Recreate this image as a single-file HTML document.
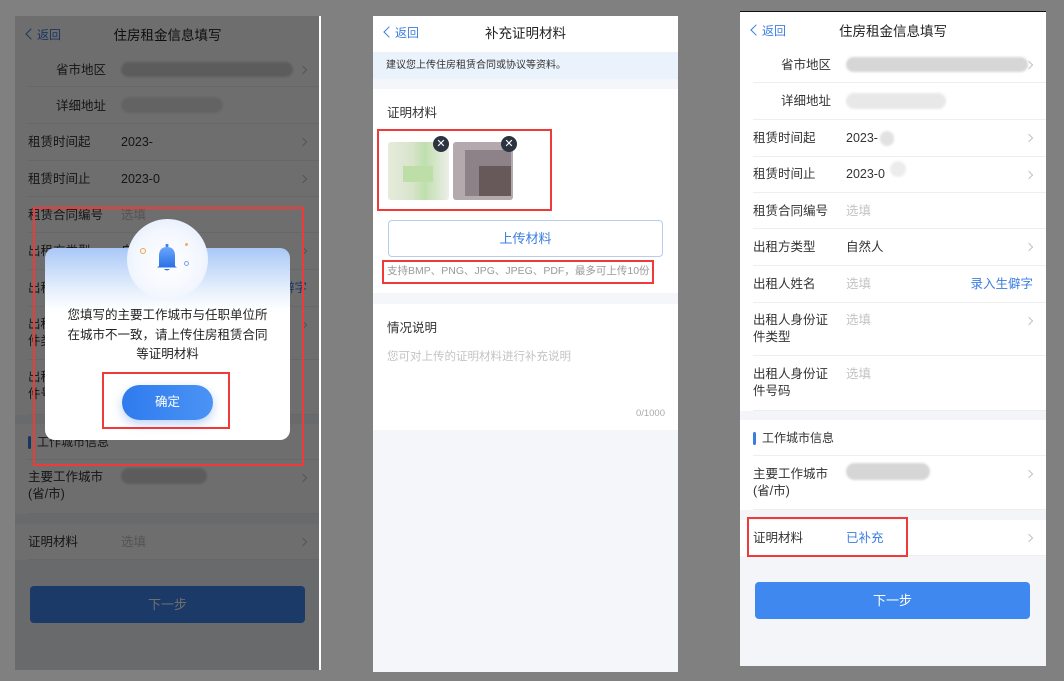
<!DOCTYPE html>
<html><head><meta charset="utf-8">
<style>
*{margin:0;padding:0;box-sizing:border-box}
body{width:1064px;height:681px;background:#808080;position:relative;overflow:hidden;font-family:"Liberation Sans","Noto Sans CJK SC",sans-serif;color:#333}
.p{position:absolute;background:#f3f5f9;overflow:hidden}
.a{position:absolute;white-space:nowrap}
.hd{position:absolute;left:0;top:0;width:100%;height:37px;background:#fff}
.back{position:absolute;left:12px;top:11px;font-size:12px;line-height:16px;color:#3a7de0}
.back:before{content:"";display:inline-block;width:7px;height:7px;border-left:1.5px solid #3a7de0;border-bottom:1.5px solid #3a7de0;transform:rotate(45deg);margin-right:2px;position:relative;top:-1px}
.ttl{position:absolute;left:0;width:100%;top:11px;line-height:18px;text-align:center;font-size:13.5px;color:#222}
.row{position:absolute;left:0;width:100%;background:#fff}
.row .l{position:absolute;left:13px;font-size:12.5px;color:#333;line-height:17px}
.row .v{position:absolute;left:106px;font-size:12.5px;color:#333;line-height:17px}
.row .ph{color:#c4c4c4}
.row:after{content:"";position:absolute;left:13px;right:0;bottom:0;height:1px;background:#eeeeee}
.chev{position:absolute;right:14px;width:6px;height:6px;border-right:1.3px solid #c2c2c2;border-top:1.3px solid #c2c2c2;transform:rotate(45deg)}
.blur{position:absolute;background:#d6d6d6;border-radius:10px;filter:blur(1px)}
.btn{position:absolute;left:15px;width:275px;height:37px;top:570px;background:#3f88f0;border-radius:4px;color:#fff;font-size:13px;text-align:center;line-height:37px}
.red{position:absolute;border:2px solid #f03a3a}
</style></head><body>

<!-- PANEL 1 -->
<div class="p" style="left:15px;top:16px;width:305px;height:654px">
 <div class="hd"></div><div class="back">返回</div><div class="ttl">住房租金信息填写</div>
 <div class="row" style="top:37px;height:34px"><div class="l" style="left:41px;top:9px">省市地区</div><div class="blur" style="left:106px;top:9px;width:172px;height:15px"></div><div class="chev" style="top:14px"></div></div>
 <div class="row" style="top:71px;height:37px"><div class="l" style="left:41px;top:11px">详细地址</div><div class="blur" style="left:106px;top:10px;width:102px;height:16px;background:#e6e6e6"></div></div>
 <div class="row" style="top:108px;height:37px"><div class="l" style="top:10px">租赁时间起</div><div class="v" style="top:10px">2023-</div><div class="chev" style="top:15px"></div></div>
 <div class="row" style="top:145px;height:36px"><div class="l" style="top:10px">租赁时间止</div><div class="v" style="top:10px">2023-0</div><div class="chev" style="top:15px"></div></div>
 <div class="row" style="top:181px;height:36px"><div class="l" style="top:10px">租赁合同编号</div><div class="v ph" style="top:10px">选填</div></div>
 <div class="row" style="top:217px;height:37px"><div class="l" style="top:10px">出租方类型</div><div class="v" style="top:10px">自然人</div><div class="chev" style="top:15px"></div></div>
 <div class="row" style="top:254px;height:37px"><div class="l" style="top:10px">出租人姓名</div><div class="v ph" style="top:10px">选填</div><div class="a" style="right:13px;top:10px;font-size:12.5px;line-height:17px;color:#3a7de0">录入生僻字</div></div>
 <div class="row" style="top:291px;height:53px"><div class="l" style="top:9px">出租人身份证<br>件类型</div><div class="v ph" style="top:9px">选填</div><div class="chev" style="top:15px"></div></div>
 <div class="row" style="top:344px;height:55px"><div class="l" style="top:9px">出租人身份证<br>件号码</div><div class="v ph" style="top:9px">选填</div></div>
 <div class="row" style="top:408px;height:36px"><div style="position:absolute;left:13px;top:12px;width:3px;height:13px;background:#3a7de0;border-radius:2px"></div><div class="l" style="left:22px;top:10px;font-size:12px">工作城市信息</div></div>
 <div class="row" style="top:444px;height:54px"><div class="l" style="top:9px">主要工作城市<br>(省/市)</div><div class="blur" style="left:106px;top:8px;width:86px;height:16px"></div><div class="chev" style="top:15px"></div></div>
 <div class="row" style="top:508px;height:36px"><div class="l" style="top:10px">证明材料</div><div class="v ph" style="top:10px">选填</div><div class="chev" style="top:15px"></div></div>
 <div class="btn">下一步</div>
 <div style="position:absolute;inset:0;background:rgba(0,0,0,0.57)"></div>
</div>
<div style="position:absolute;left:319px;top:16px;width:2px;height:654px;background:#fff"></div>
<!-- dialog -->
<div style="position:absolute;left:45px;top:248px;width:245px;height:192px;background:linear-gradient(#a9c8f7 0px,#e4eefc 40px,#fff 62px);border-radius:10px"></div>
<div style="position:absolute;left:127px;top:219px;width:81px;height:81px;border-radius:50%;background:radial-gradient(circle at 50% 55%,#fff 0,#f3f7fe 55%,#dce8fb 100%)"></div>
<svg class="a" style="left:150px;top:242px" width="34" height="34" viewBox="0 0 34 34">
 <defs><linearGradient id="g" x1="0" y1="0" x2="0" y2="1"><stop offset="0" stop-color="#6aa7fb"/><stop offset="1" stop-color="#2a6fe8"/></linearGradient></defs>
 <rect x="15.5" y="2" width="3" height="3" rx="1" fill="#3d7ff0"/>
 <path d="M9 24 L9 14 Q9 5 17 5 Q25 5 25 14 L25 24 L27 25.5 L7 25.5 Z" fill="url(#g)"/>
 <path d="M14 27 Q17 30 20 27 Z" fill="#2a6fe8"/>
</svg>
<div class="a" style="left:140px;top:248px;width:6px;height:6px;border:1.3px solid #f0a44a;border-radius:50%"></div>
<div class="a" style="left:185px;top:243px;width:3px;height:3px;background:#f0b060;border-radius:50%"></div>
<div class="a" style="left:184px;top:261px;width:5px;height:5px;border:1px solid #7aa6ee;border-radius:50%"></div>
<div class="a" style="left:45px;top:306px;width:245px;text-align:center;font-size:12.5px;line-height:19.5px;color:#222">您填写的主要工作城市与任职单位所<br>在城市不一致，请上传住房租赁合同<br>等证明材料</div>
<div class="a" style="left:122px;top:385px;width:91px;height:35px;border-radius:18px;background:linear-gradient(90deg,#2f7bee,#4b93f5);box-shadow:0 4px 10px rgba(60,130,240,0.35);color:#fff;font-size:12.5px;text-align:center;line-height:35px">确定</div>
<div class="red" style="left:33px;top:207px;width:271px;height:259px"></div>
<div class="red" style="left:102px;top:372px;width:128px;height:57px"></div>

<!-- PANEL 2 -->
<div class="p" style="left:373px;top:16px;width:305px;height:656px;background:#f4f6fa">
 <div class="hd" style="height:36px"></div><div class="back" style="left:12px;top:9px">返回</div><div class="ttl" style="top:9px">补充证明材料</div>
 <div class="a" style="left:0;top:36px;width:305px;height:27px;background:#eaf2fc"></div>
 <div class="a" style="left:13px;top:43px;font-size:10px;line-height:13px;color:#333">建议您上传住房租赁合同或协议等资料。</div>
 <div class="a" style="left:0;top:73px;width:305px;height:204px;background:#fff"></div>
 <div class="a" style="left:14px;top:89px;font-size:12.5px;line-height:17px;color:#333">证明材料</div>
 <div class="a" style="left:15px;top:126px;width:61px;height:58px;background:linear-gradient(90deg,#e6ebdc,#d8e4cc 40%,#bfdfae 60%,#eceee8);border-radius:3px"></div>
 <div class="a" style="left:30px;top:150px;width:30px;height:16px;background:#bddfa7"></div>
 <div class="a" style="left:80px;top:126px;width:60px;height:58px;background:#b4a9ad;border-radius:3px"></div>
 <div class="a" style="left:92px;top:134px;width:46px;height:46px;background:#8d8287"></div>
 <div class="a" style="left:106px;top:150px;width:32px;height:30px;background:#67595a"></div>
 <div class="a" style="left:60px;top:120px;width:16px;height:16px;border-radius:50%;background:#2b3440;color:#fff;font-size:11px;line-height:16px;text-align:center">✕</div>
 <div class="a" style="left:128px;top:120px;width:16px;height:16px;border-radius:50%;background:#2b3440;color:#fff;font-size:11px;line-height:16px;text-align:center">✕</div>
 <div class="a" style="left:15px;top:204px;width:275px;height:37px;border:1px solid #b6cdee;border-radius:4px;text-align:center;line-height:35px;color:#3a7de0;font-size:13px">上传材料</div>
 <div class="a" style="left:14px;top:248px;font-size:10.5px;line-height:14px;color:#999">支持BMP、PNG、JPG、JPEG、PDF，最多可上传10份</div>
 <div class="a" style="left:0;top:288px;width:305px;height:126px;background:#fff"></div>
 <div class="a" style="left:14px;top:304px;font-size:12.5px;line-height:17px;color:#333">情况说明</div>
 <div class="a" style="left:14px;top:334px;font-size:11.5px;line-height:15px;color:#c4c4c4">您可对上传的证明材料进行补充说明</div>
 <div class="a" style="right:13px;top:392px;font-size:9.5px;line-height:12px;color:#aaa">0/1000</div>
</div>
<div class="red" style="left:377px;top:129px;width:175px;height:82px"></div>
<div class="red" style="left:382px;top:260px;width:272px;height:24px"></div>

<!-- PANEL 3 -->
<div style="position:absolute;left:740px;top:11px;width:306px;height:2px;background:#111"></div>
<div class="p" style="left:740px;top:12px;width:306px;height:654px">
 <div class="hd"></div><div class="back">返回</div><div class="ttl">住房租金信息填写</div>
 <div class="row" style="top:37px;height:34px"><div class="l" style="left:41px;top:8px">省市地区</div><div class="blur" style="left:106px;top:8px;width:182px;height:15px"></div><div class="chev" style="top:13px"></div></div>
 <div class="row" style="top:71px;height:37px"><div class="l" style="left:41px;top:10px">详细地址</div><div class="blur" style="left:106px;top:10px;width:100px;height:16px;background:#e8e8e8"></div></div>
 <div class="row" style="top:108px;height:37px"><div class="l" style="top:10px">租赁时间起</div><div class="v" style="top:10px">2023-</div><div class="blur" style="left:140px;top:11px;width:14px;height:15px;background:#e2e2e2"></div><div class="chev" style="top:15px"></div></div>
 <div class="row" style="top:145px;height:36px"><div class="l" style="top:9px">租赁时间止</div><div class="v" style="top:9px">2023-0</div><div class="blur" style="left:150px;top:4px;width:16px;height:16px;background:#ececec"></div><div class="chev" style="top:15px"></div></div>
 <div class="row" style="top:181px;height:36px"><div class="l" style="top:10px">租赁合同编号</div><div class="v ph" style="top:10px">选填</div></div>
 <div class="row" style="top:217px;height:37px"><div class="l" style="top:10px">出租方类型</div><div class="v" style="top:10px">自然人</div><div class="chev" style="top:15px"></div></div>
 <div class="row" style="top:254px;height:37px"><div class="l" style="top:10px">出租人姓名</div><div class="v ph" style="top:10px">选填</div><div class="a" style="right:13px;top:10px;font-size:12.5px;line-height:17px;color:#3a7de0">录入生僻字</div></div>
 <div class="row" style="top:291px;height:53px"><div class="l" style="top:9px">出租人身份证<br>件类型</div><div class="v ph" style="top:9px">选填</div><div class="chev" style="top:15px"></div></div>
 <div class="row" style="top:344px;height:55px"><div class="l" style="top:10px">出租人身份证<br>件号码</div><div class="v ph" style="top:10px">选填</div></div>
 <div class="row" style="top:408px;height:36px"><div style="position:absolute;left:13px;top:12px;width:3px;height:13px;background:#3a7de0;border-radius:2px"></div><div class="l" style="left:22px;top:10px;font-size:12px">工作城市信息</div></div>
 <div class="row" style="top:444px;height:54px"><div class="l" style="top:10px">主要工作城市<br>(省/市)</div><div class="blur" style="left:106px;top:7px;width:84px;height:17px"></div><div class="chev" style="top:15px"></div></div>
 <div class="row" style="top:508px;height:36px"><div class="l" style="top:10px">证明材料</div><div class="v" style="top:10px;color:#3a7de0">已补充</div><div class="chev" style="top:15px"></div></div>
 <div class="btn">下一步</div>
</div>
<div class="red" style="left:747px;top:517px;width:161px;height:40px"></div>
</body></html>
